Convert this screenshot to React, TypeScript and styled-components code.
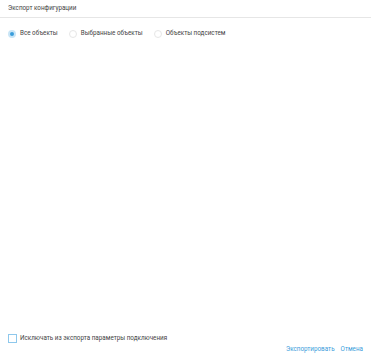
import { useState } from 'react';

import styled, { createGlobalStyle } from 'styled-components';

const GlobalStyle = createGlobalStyle`
    html, body {
        margin: 0;
        padding: 0;
        background: #ffffff;
    }
    body {
        font-family: Roboto, "Liberation Sans", sans-serif;
        color: #333333;
    }
`;

const Dialog = styled.div`
    display: flex;
    flex-direction: column;
    width: 100%;
    height: 100vh;
    box-sizing: border-box;
`;

const Header = styled.div`
    padding: 4px 8px 4px;
    font-size: 6.3px;
    line-height: 9px;
    color: #444444;
    border-bottom: 1px solid #e6e6e6;
`;

const Options = styled.div`
    display: flex;
    align-items: center;
    gap: 11px;
    padding: 11px 8px 0;
`;

const RadioLabel = styled.label`
    display: flex;
    align-items: center;
    gap: 4px;
    font-size: 6.3px;
    line-height: 9px;
    color: #444444;
    cursor: pointer;
`;

const RadioCircle = styled.span<{ $checked: boolean }>`
    box-sizing: border-box;
    width: 8px;
    height: 8px;
    border-radius: 50%;
    border: ${(p) => (p.$checked ? '2px solid #c9e5f6' : '1px solid #e6e6e6')};
    background: ${(p) => (p.$checked ? '#3a9ddb' : '#ffffff')};
`;

const Spacer = styled.div`
    flex: 1;
`;

const Footer = styled.div`
    display: flex;
    flex-direction: column;
    padding: 0 8px 7px;
`;

const CheckRow = styled.label`
    display: flex;
    align-items: center;
    gap: 3px;
    font-size: 6.3px;
    line-height: 9px;
    color: #444444;
    cursor: pointer;
`;

const CheckBox = styled.span`
    box-sizing: border-box;
    width: 9px;
    height: 9px;
    border: 1px solid #8ec8ec;
    background: #ffffff;
`;

const Buttons = styled.div`
    display: flex;
    justify-content: flex-end;
    gap: 6px;
    margin-top: 2px;
`;

const LinkButton = styled.button`
    padding: 0;
    border: none;
    background: none;
    font-family: inherit;
    font-size: 6.3px;
    line-height: 9px;
    color: #3a9ddb;
    cursor: pointer;
`;

const options = ['Все объекты', 'Выбранные объекты', 'Объекты подсистем'];

function App() {
    const [selected, setSelected] = useState<number>(0);

    return (
        <Dialog>
            <GlobalStyle />
            <Header>Экспорт конфигурации</Header>
            <Options>
                {options.map((option, index) => (
                    <RadioLabel key={option} onClick={() => setSelected(index)}>
                        <RadioCircle $checked={selected === index} />
                        {option}
                    </RadioLabel>
                ))}
            </Options>
            <Spacer />
            <Footer>
                <CheckRow>
                    <CheckBox />
                    Исключать из экспорта параметры подключения
                </CheckRow>
                <Buttons>
                    <LinkButton>Экспортировать</LinkButton>
                    <LinkButton>Отмена</LinkButton>
                </Buttons>
            </Footer>
        </Dialog>
    );
}

export default App;
